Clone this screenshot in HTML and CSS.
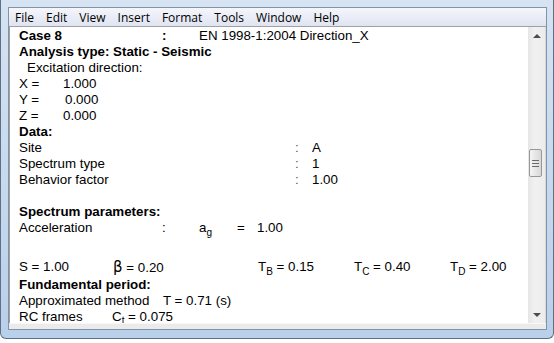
FILE: index.html
```html
<!DOCTYPE html>
<html lang="en">
<head>
    <meta charset="UTF-8">
    <title>Case 8 - Report</title>
    <link rel="stylesheet" href="styles.css">
</head>
<body>

<div class="window">
    <div class="inner">
        <!-- Menu -->
        <div class="menubar">
            <span>File</span>
            <span>Edit</span>
            <span>View</span>
            <span>Insert</span>
            <span>Format</span>
            <span>Tools</span>
            <span>Window</span>
            <span>Help</span>
        </div>

        <div class="client">
            <div class="doc">
                <div class="row bold"><span class="lab-a">Case 8</span><span class="col">:</span><span class="nb">EN 1998-1:2004 Direction_X</span></div>
                <div class="row bold">Analysis type: Static - Seismic</div>
                <div class="row indent">Excitation direction:</div>
                <div class="row"><span class="xyz">X =</span>1.000</div>
                <div class="row"><span class="xyz wide">Y =</span>0.000</div>
                <div class="row"><span class="xyz">Z =</span>0.000</div>
                <div class="row bold">Data:</div>
                <div class="row"><span class="lab-d">Site</span><span class="col-d">:</span>A</div>
                <div class="row"><span class="lab-d">Spectrum type</span><span class="col-d">:</span>1</div>
                <div class="row"><span class="lab-d">Behavior factor</span><span class="col-d">:</span>1.00</div>
                <div class="row"></div>
                <div class="row bold">Spectrum parameters:</div>
                <div class="row tall"><span class="lab-a">Acceleration</span><span class="col">:</span><span class="sym">a<sub>g</sub></span><span class="eq">=</span>1.00</div>
                <div class="row"></div>
                <div class="row params">
                    <span class="p-s">S = 1.00</span>
                    <span class="p-b"><span class="beta">β</span> = 0.20</span>
                    <span class="p-t">T<sub>B</sub> = 0.15</span>
                    <span class="p-t">T<sub>C</sub> = 0.40</span>
                    <span>T<sub>D</sub> = 2.00</span>
                </div>
                <div class="row bold">Fundamental period:</div>
                <div class="row"><span class="lab-m">Approximated method</span>T = 0.71 (s)</div>
                <div class="row"><span class="lab-r">RC frames</span><span>C<sub class="low">t</sub> = 0.075</span></div>
            </div>

            <div class="vscroll">
                <div class="arrow"><span class="tri-up"></span></div>
                <div class="track">
                    <div class="thumb"><span class="grip"></span></div>
                </div>
                <div class="arrow"><span class="tri-down"></span></div>
            </div>
        </div>

        <div class="footer"></div>
    </div>
</div>

</body>
</html>
```

FILE: styles.css
```css
body {
    margin: 0;
    background: #ffffff;
}

.window {
    width: 554px;
    height: 339px;
    box-sizing: border-box;
    padding: 7px 6px 8px 7px;
    border: 1px solid #5d7087;
    border-top: none;
    border-radius: 0 0 6px 6px;
    background: linear-gradient(#d5e3f2, #b9d0ea);
}

.inner {
    height: 323px;
    box-sizing: border-box;
    border: 1px solid #8393a6;
    display: flex;
    flex-direction: column;
}

.menubar {
    height: 18px;
    display: flex;
    align-items: center;
    background: linear-gradient(#f5f6fb, #dfe4f1);
    font-family: "Open Sans", "Noto Sans", sans-serif;
    font-size: 12px;
    color: #000;
}

.menubar span {
    padding: 0 6px;
}

.client {
    height: 297px;
    box-sizing: border-box;
    display: flex;
    border-top: 1px solid #a0a0a0;
    border-left: 1px solid #a0a0a0;
    background: #fff;
}

.doc {
    flex: 1;
    padding: 1px 0 0 9px;
    font-family: "Liberation Sans", Arial, sans-serif;
    font-size: 13.33px;
    color: #000;
    overflow: hidden;
}

.row {
    height: 16px;
    line-height: 16px;
    white-space: pre;
    display: flex;
}

.row.tall {
    height: 23px;
}

.row.params {
    height: 18px;
}

.bold {
    font-weight: bold;
}

.indent {
    padding-left: 8px;
}

.xyz {
    width: 44px;
}

.xyz.wide {
    width: 46px;
}

.lab-a {
    width: 143px;
}

.col {
    width: 37px;
}

.nb {
    font-weight: normal;
}

.lab-d {
    width: 276px;
}

.col-d {
    width: 17px;
    color: #6e5634;
}

.sym {
    width: 38px;
}

.eq {
    width: 20px;
}

sub {
    font-size: 10px;
    line-height: 0;
    vertical-align: -4px;
}

sub.low {
    vertical-align: -3px;
}

.p-s {
    width: 94px;
}

.p-b {
    width: 145px;
}

.p-t {
    width: 96px;
}

.beta {
    font-family: "DejaVu Sans", sans-serif;
    font-size: 15px;
    line-height: 16px;
}

.lab-m {
    width: 144px;
}

.lab-r {
    width: 93px;
}

.vscroll {
    width: 17px;
    display: flex;
    flex-direction: column;
    background: linear-gradient(to right, #e6e6e6, #f1f1f1 40%, #ececec);
    border-right: 1px solid #d9d9d9;
}

.arrow {
    height: 17px;
    display: flex;
    justify-content: center;
    align-items: center;
}

.tri-up {
    border-left: 4px solid transparent;
    border-right: 4px solid transparent;
    border-bottom: 4px solid #4d4d4d;
}

.tri-down {
    border-left: 4px solid transparent;
    border-right: 4px solid transparent;
    border-top: 4px solid #4d4d4d;
}

.track {
    flex: 1;
    padding-top: 105px;
}

.thumb {
    width: 13px;
    height: 28px;
    margin-left: 1px;
    box-sizing: border-box;
    border: 1px solid #979797;
    border-radius: 2px;
    background: linear-gradient(to right, #f4f4f4, #e6e6e6 50%, #d8d8d8);
    display: flex;
    justify-content: center;
    align-items: center;
}

.grip {
    width: 7px;
    height: 5px;
    border-top: 1px solid #6a6a6a;
    border-bottom: 1px solid #6a6a6a;
    background: linear-gradient(transparent 2px, #6a6a6a 2px, #6a6a6a 3px, transparent 3px);
}

.footer {
    flex: 1;
    background: #ebebeb;
    border-top: 1px solid #f7f7f7;
}
```
